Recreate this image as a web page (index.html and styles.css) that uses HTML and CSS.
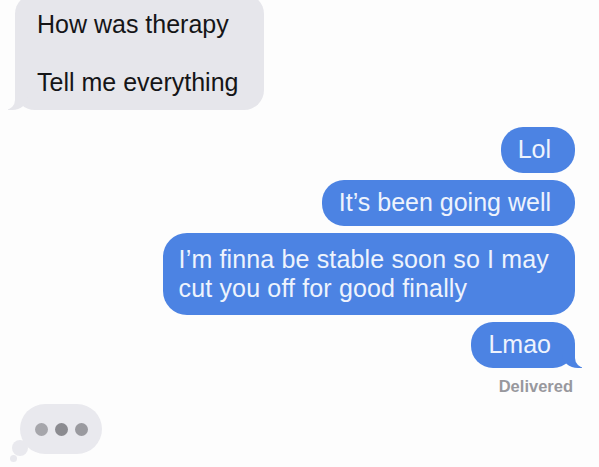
FILE: index.html
```html
<!DOCTYPE html>
<html>
<head>
<meta charset="utf-8">
<link rel="stylesheet" href="styles.css">
</head>
<body>
<div class="thread">
  <div class="bubble in tail-left">How was therapy<br><br>Tell me everything</div>
  <div class="sent">
    <div class="bubble out">Lol</div>
    <div class="bubble out">It’s been going well</div>
    <div class="bubble out multi">I’m finna be stable soon so I may<br>cut you off for good finally</div>
    <div class="bubble out tail-right">Lmao</div>
  </div>
  <div class="delivered">Delivered</div>
  <div class="typing">
    <span class="dot d1"></span><span class="dot d2"></span><span class="dot d3"></span>
  </div>
</div>
</body>
</html>
```
FILE: styles.css
```css
html, body {
  margin: 0;
  padding: 0;
  background: #fdfdfd;
}
.thread {
  width: 599px;
  height: 467px;
  overflow: hidden;
  display: flex;
  flex-direction: column;
  font-family: "Liberation Sans", Arial, sans-serif;
  font-size: 25px;
  line-height: 29px;
}
.bubble {
  position: relative;
  border-radius: 22px;
}
.in {
  align-self: flex-start;
  margin: -6px 0 0 15px;
  padding: 16px 26px 13px 22px;
  background: #e6e6eb;
  color: #151517;
  border-radius: 20px;
}
.tail-left::before {
  content: "";
  position: absolute;
  bottom: 0;
  left: -7px;
  width: 20px;
  height: 22px;
  background: #e6e6eb;
  border-bottom-right-radius: 16px 14px;
}
.tail-left::after {
  content: "";
  position: absolute;
  bottom: 0;
  left: -26px;
  width: 26px;
  height: 22px;
  background: #fdfdfd;
  border-bottom-right-radius: 10px;
}
.sent {
  display: flex;
  flex-direction: column;
  align-items: flex-end;
  gap: 7px;
  margin-top: 17px;
  padding-right: 24px;
}
.out {
  background: #4c83e3;
  color: #eef3fd;
  padding: 8px 24px 9px 17px;
}
.out.multi {
  padding: 12px 26px 12px 16px;
  border-radius: 24px;
  letter-spacing: 0.15px;
}
.tail-right::before {
  content: "";
  position: absolute;
  bottom: 0;
  right: -7px;
  width: 20px;
  height: 22px;
  background: #4c83e3;
  border-bottom-left-radius: 16px 14px;
}
.tail-right::after {
  content: "";
  position: absolute;
  bottom: 0;
  right: -26px;
  width: 26px;
  height: 22px;
  background: #fdfdfd;
  border-bottom-left-radius: 10px;
}
.delivered {
  align-self: flex-end;
  margin: 9px 26px 0 0;
  font-weight: 700;
  font-size: 16.5px;
  line-height: 18px;
  color: #98989d;
}
.typing {
  position: relative;
  align-self: flex-start;
  margin: 9px 0 0 20px;
  width: 82px;
  height: 50px;
  border-radius: 25px;
  background: #e9e9ee;
  display: flex;
  align-items: center;
  justify-content: center;
  gap: 7px;
}
.typing::before {
  content: "";
  position: absolute;
  left: -8px;
  bottom: -2px;
  width: 16px;
  height: 16px;
  border-radius: 50%;
  background: #e9e9ee;
}
.typing::after {
  content: "";
  position: absolute;
  left: -10px;
  bottom: -8px;
  width: 7px;
  height: 7px;
  border-radius: 50%;
  background: #e9e9ee;
}
.dot {
  width: 13px;
  height: 13px;
  border-radius: 50%;
}
.d1 { background: #a6a6ab; }
.d2 { background: #8b8b90; }
.d3 { background: #9a9a9f; }
```
